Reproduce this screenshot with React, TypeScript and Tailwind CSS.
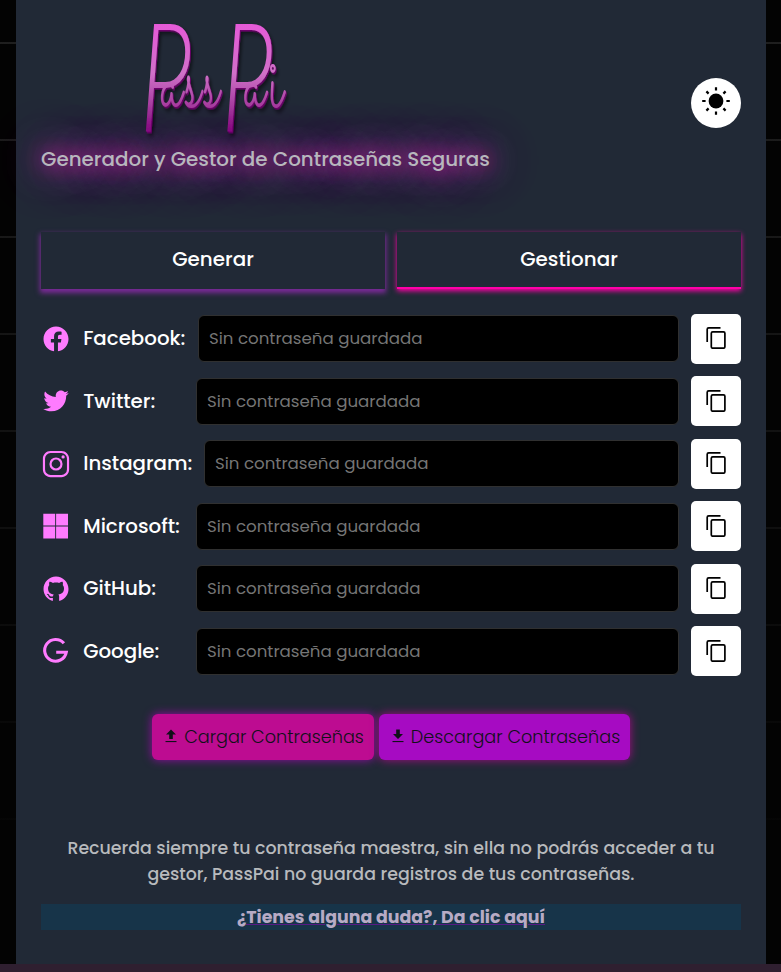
import React from 'react';
import { RiFacebookCircleFill, RiTwitterFill, RiGithubFill } from 'react-icons/ri';
import { IoLogoInstagram } from 'react-icons/io5';

type IconProps = { className?: string };
type Service = { name: string; Icon: React.ComponentType<IconProps>; label: string };

function MicrosoftIcon({ className }: IconProps) {
  return (
    <svg viewBox="0 0 30 30" className={className} fill="currentColor">
      <path d="M2.300 2.700h11.900v11.900H2.300zM15.100 2.700H27v11.900H15.100zM2.300 15.500h11.900v11.900H2.300zM15.100 15.500H27v11.900H15.100z" />
    </svg>
  );
}

function GoogleIcon({ className }: IconProps) {
  return (
    <svg viewBox="0 0 30 30" className={className} fill="none" stroke="currentColor" strokeWidth="3.1">
      <path d="M22.900 7.300A10.900 10.900 0 1 0 25.300 16.300H15.200" />
    </svg>
  );
}

const services: Service[] = [
  { name: 'Facebook', Icon: RiFacebookCircleFill, label: 'w-[102.5px]' },
  { name: 'Twitter', Icon: RiTwitterFill, label: 'w-[100.5px]' },
  { name: 'Instagram', Icon: IoLogoInstagram, label: 'w-[108.5px]' },
  { name: 'Microsoft', Icon: MicrosoftIcon, label: 'w-[100.5px]' },
  { name: 'GitHub', Icon: RiGithubFill, label: 'w-[100.5px]' },
  { name: 'Google', Icon: GoogleIcon, label: 'w-[100.5px]' },
];

const script = "Sacramento, 'Great Vibes', 'Alex Brush', Allura, 'Dancing Script', Pacifico, Caveat, Satisfy, cursive";
const stem = 'Lato, sans-serif';

function Logo() {
  return (
    <svg width="160" height="124" viewBox="0 0 160 124" className="ml-[96px] block overflow-visible" aria-label="PassPai">
      <defs>
        <linearGradient id="ink" x1="0" y1="0" x2="0" y2="1">
          <stop offset="0.1" stopColor="#f04fe0" />
          <stop offset="0.5" stopColor="#d070c8" />
          <stop offset="0.85" stopColor="#7c0a76" />
        </linearGradient>
        <filter id="emboss" x="-20%" y="-20%" width="140%" height="140%">
          <feDropShadow dx="1" dy="1" stdDeviation="0.5" floodColor="#6d006b" />
          <feDropShadow dx="2" dy="2" stdDeviation="1.5" floodColor="#000" floodOpacity="0.5" />
        </filter>
      </defs>
      <text
        transform="translate(3 90) scale(0.94 1.5)"
        fill="url(#ink)"
        filter="url(#emboss)"
        fontFamily={script}
      >
        <tspan fontFamily={stem} fontStyle="italic" fontWeight="300" fontSize="101" dy="17.5" letterSpacing="-33">P</tspan>
        <tspan fontSize="66" dy="-17.5" letterSpacing="3">ass</tspan>
        <tspan fontFamily={stem} fontStyle="italic" fontWeight="300" fontSize="101" dy="17.5" letterSpacing="-31">P</tspan>
        <tspan fontSize="66" dy="-17.5" letterSpacing="5">ai</tspan>
      </text>
    </svg>
  );
}

function SunIcon() {
  return (
    <svg width="30" height="30" viewBox="0 0 30 30" className="mb-1 block">
      <circle cx="15" cy="15" r="7.4" />
      <path
        d="M15 1.200v3.400M15 25.400v3.400M1.200 15h3.400M25.400 15h3.400M5.400 5.400l2.200 2.200M22.400 22.400l2.200 2.200M5.400 24.600l2.200-2.200M22.400 7.600l2.200-2.200"
        stroke="black"
        strokeWidth="2.2"
      />
    </svg>
  );
}

function CopyIcon() {
  return (
    <svg width="24" height="24" viewBox="0 0 24 24" className="mb-[3px] block" fill="none" stroke="#000" strokeWidth="1.7">
      <path d="M3.200 17V4.300q0-1.500 1.500-1.500H16.500" />
      <rect x="7.300" y="6.800" width="13.600" height="16.400" rx="1.400" />
    </svg>
  );
}

function ArrowIcon({ up = false }: { up?: boolean }) {
  return (
    <svg width="12" height="14" viewBox="0 0 12 14" className="mb-0.5 block" fill="currentColor">
      <path d={up ? 'M6 .5l5 5H7.800V10H4.200V5.500H1z' : 'M4.200.5h3.600V5H11L6 10 1 5h3.200z'} />
      <path d="M.5 12h11v1.100H.5z" />
    </svg>
  );
}

export default function App() {
  return (
    <div className="relative h-[972px] w-[781px] overflow-hidden bg-[#030303] px-4 font-[Poppins,Inter,'Open_Sans',sans-serif]">
      <div className="absolute inset-0 bg-[repeating-linear-gradient(to_bottom,transparent_0px,transparent_42px,#202020_42px,#202020_44px,transparent_44px,transparent_97px)]" />
      <div className="absolute inset-0 bg-linear-to-b from-transparent to-[#030303] to-[900px]" />
      <main className="relative flex h-[964px] w-[750px] flex-col bg-[#212936] px-[25px] text-white">
        <header className="flex h-[232px] items-start justify-between pt-4">
          <div>
            <Logo />
            <h1 className="mt-1 text-[19.9px] leading-[30px] font-medium whitespace-nowrap text-[#b7b7bd] [text-shadow:0_0_20px_#ff20c8,0_0_40px_#ff40d0,0_0_60px_#ff60d8]">
              Generador y Gestor de Contraseñas Seguras
            </h1>
          </div>
          <button className="mt-[62px] flex size-[50px] items-center justify-center rounded-full bg-white" aria-label="Tema">
            <SunIcon />
          </button>
        </header>

        <nav className="flex h-[57px] gap-3 text-[19.9px] font-medium">
          <button className="flex-1 bg-[#212936] pb-px shadow-[0_3px_5px_1px_#7b2a98]">Generar</button>
          <button className="flex-1 border-b-2 border-[#ff00a8] bg-[#212936] pt-px shadow-[0_2px_5px_#ff00a8]">Gestionar</button>
        </nav>

        <section className="mt-[24.9px] flex flex-col gap-[12.5px]">
          {services.map(({ name, Icon, label }) => (
            <div key={name} className="flex h-[50px] items-center">
              <Icon className="size-[30px] shrink-0 text-[#ff7bff]" />
              <span className={`ml-[12.2px] mr-[12.3px] shrink-0 pt-[0.9px] text-[19.8px] font-medium whitespace-nowrap ${label}`}>{name}:</span>
              <input
                placeholder="Sin contraseña guardada"
                className="h-[47px] min-w-0 flex-1 rounded-md border border-[#303030] bg-black px-[10px] text-[16.65px] placeholder:text-[#757575]"
              />
              <button className="ml-3 flex size-[50px] items-center justify-center rounded-[5px] bg-white" aria-label="Copiar">
                <CopyIcon />
              </button>
            </div>
          ))}
        </section>

        <div className="mt-[37.6px] flex h-[46px] justify-center gap-[5px] text-[17.65px] font-light text-[#101019]">
          <button className="flex w-[222px] items-center justify-center gap-[7px] rounded-md bg-[#bd0c91] pl-[3px] whitespace-nowrap shadow-[0_0_10px_#950ba5]">
            <ArrowIcon up />
            Cargar Contraseñas
          </button>
          <button className="flex w-[251px] items-center justify-center gap-[7px] rounded-md bg-[#a60bc2] pl-[3px] whitespace-nowrap shadow-[0_0_10px_#a70b86]">
            <ArrowIcon />
            Descargar Contraseñas
          </button>
        </div>

        <footer className="mt-[75px] text-center text-[17.4px] leading-[26px] font-medium text-[#b8babd]">
          <p className="whitespace-nowrap">
            Recuerda siempre tu contraseña maestra, sin ella no podrás acceder a tu
            <br />
            gestor, PassPai no guarda registros de tus contraseñas.
          </p>
          <a className="mt-[17px] block h-[26px] bg-[#173449] font-bold text-[#b7abc5] underline decoration-[#571a85] decoration-1">
            ¿Tienes alguna duda?, Da clic aquí
          </a>
        </footer>
      </main>
      <div className="absolute inset-x-0 bottom-0 h-2 bg-[#2f1f30]" />
    </div>
  );
}
